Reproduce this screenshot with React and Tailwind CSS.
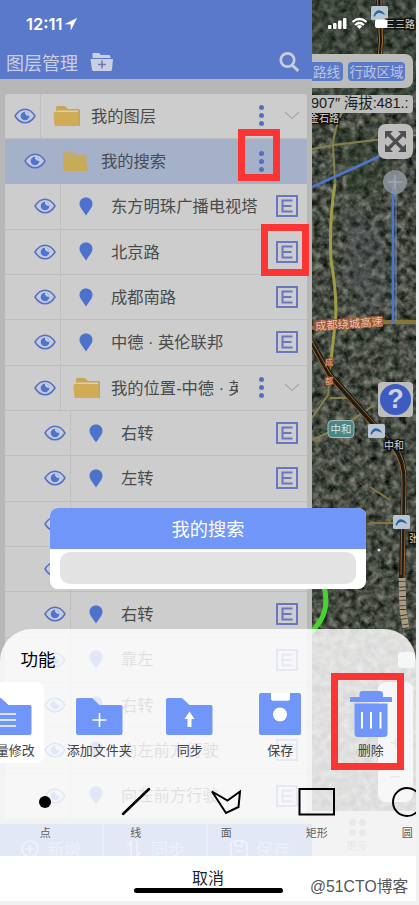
import React from "react";

const LINE = "border-[#bdbdbd]";

function Eye() {
  return (
    <svg width="22" height="16" viewBox="0 0 22 16" fill="none" className="shrink-0">
      <path d="M1 8C4 3.200 7.300 1.200 11 1.200S18 3.200 21 8C18 12.800 14.700 14.800 11 14.800S4 12.800 1 8Z" fill="#c3cbe0" stroke="#5b70bd" strokeWidth="1.500" />
      <circle cx="11" cy="8" r="4.300" fill="#4f74cc" />
      <path d="M11 3.700A4.300 4.300 0 0 1 15.300 8L12.500 7.500A2 2 0 0 0 11 6Z" fill="#c3cbe0" />
    </svg>
  );
}

function Pin() {
  return (
    <svg width="14" height="19" viewBox="0 0 14 19" className="shrink-0">
      <path d="M7 0.500C3.300 0.500 0.500 3.200 0.500 6.700C0.500 10.500 4 13.500 7 18.500C10 13.500 13.500 10.500 13.500 6.700C13.500 3.200 10.700 0.500 7 0.500Z" fill="#4d72cb" />
    </svg>
  );
}

function OpenFolder() {
  return (
    <svg width="28" height="22" viewBox="0 0 28 22" className="shrink-0">
      <path d="M3 21V2.500Q3 1 4.500 1H12L15 4H25.500Q27 4 27 5.500V21Z" fill="#c4a75c" />
      <path d="M3 7H25V5.500H4Z" fill="#ddd1ad" />
      <path d="M0.500 8.500Q0.500 7 2 7H23.500Q25 7 25 8.500L26 21H3Q1.500 21 1.400 19.500Z" fill="#cfac55" />
    </svg>
  );
}

function ClosedFolder() {
  return (
    <svg width="25" height="20" viewBox="0 0 25 20" className="shrink-0">
      <path d="M0 18V2Q0 0.500 1.500 0.500H9L12 3.500H22Q23.500 3.500 23.500 5V10L25 18.500Q25 20 23.500 20H1.500Q0 20 0 18Z" fill="#c1ab72" />
      <path d="M0 7H21.500L25 18.500Q25 20 23.500 20H1.500Q0 20 0 18Z" fill="#c8ab57" />
    </svg>
  );
}

function Dots() {
  return (
    <div className="flex w-5 shrink-0 flex-col items-center gap-[3px]">
      <i className="size-[5px] rounded-full bg-[#566fc4]" />
      <i className="size-[5px] rounded-full bg-[#566fc4]" />
      <i className="size-[5px] rounded-full bg-[#566fc4]" />
    </div>
  );
}

function Chevron() {
  return (
    <svg width="16" height="9" viewBox="0 0 16 9" fill="none" className="mr-[7px] ml-[13px] shrink-0">
      <path d="M1 1L8 7.500L15 1" stroke="#a9a9a9" strokeWidth="1.200" />
    </svg>
  );
}

function EditMark() {
  return (
    <svg width="22" height="22" viewBox="0 0 22 22" fill="none" className="mr-[9px] shrink-0">
      <rect x="1" y="1" width="20" height="20" stroke="#6a76bd" strokeWidth="2" />
      <path d="M16.500 5.500H6.500V16.500H16.500M6.500 11H15.500" stroke="#6a76bd" strokeWidth="2" />
    </svg>
  );
}

const rows = [
  { name: "我的图层", level: 0, kind: "open", chevron: true },
  { name: "我的搜索", level: 1, kind: "closed", selected: true },
  { name: "东方明珠广播电视塔", level: 2 },
  { name: "北京路", level: 2 },
  { name: "成都南路", level: 2 },
  { name: "中德 · 英伦联邦", level: 2 },
  { name: "我的位置-中德 · 英", level: 2, kind: "open", chevron: true },
  { name: "右转", level: 3 },
  { name: "左转", level: 3 },
  { name: "直行", level: 3 },
  { name: "左转", level: 3 },
  { name: "右转", level: 3 },
  { name: "靠左", level: 3 },
  { name: "右转", level: 3 },
  { name: "向左前方行驶", level: 3 },
  { name: "向左前方行驶", level: 3 },
];

const eyeCell = ["w-9 pl-[9px]", "w-[46px] pl-[19px]", "w-[56px] pl-[29px]", "w-[66px] pl-[39px]"];

function Row({ row }) {
  const folder = row.kind;
  return (
    <div className={`flex h-[45.330px] shrink-0 items-center border-b ${row.selected ? "border-[#a4b1ca] bg-[#a5b1c9]" : `${LINE} bg-[#cdcdcd]`}`}>
      <div className={`flex h-full shrink-0 items-center ${row.selected ? "" : "border-r border-[#c0c0c0]"} ${eyeCell[row.level]}`}>
        <Eye />
      </div>
      <div className="flex w-[50px] shrink-0 items-center pl-3">
        {folder === "open" && <OpenFolder />}
        {folder === "closed" && <ClosedFolder />}
        {!folder && <div className="pl-[6px]"><Pin /></div>}
      </div>
      <div className={`min-w-0 flex-1 overflow-hidden font-['Liberation_Sans','Noto_Sans_CJK_SC',sans-serif] text-[16.300px] whitespace-nowrap ${row.selected ? "text-[#474c56]" : "text-[#4b4b4b]"} ${folder ? "mr-[13px]" : ""}`}>{row.name}</div>
      {folder ? (
        <>
          <Dots />
          {row.chevron ? <Chevron /> : <span className="w-[36px] shrink-0" />}
        </>
      ) : (
        <EditMark />
      )}
    </div>
  );
}

function LayerPanel() {
  return (
    <div className="absolute top-0 left-0 flex h-[856px] w-[312px] flex-col bg-[#b7b7b7]">
      <header className="flex h-[79px] shrink-0 flex-col bg-[#5b79cb]">
        <div className="flex h-12 items-center pl-[26px] text-white">
          <span className="font-['Inter','Liberation_Sans',sans-serif] text-[16.500px] font-semibold">12:11</span>
          <svg width="12" height="12" viewBox="0 0 12 12" className="ml-[3px]">
            <path d="M11.500 0.500L0.500 6H6V11.500Z" fill="white" stroke="white" strokeWidth=".6" />
          </svg>
        </div>
        <div className="flex h-[27px] items-center pr-3 pl-[6px] text-[#c9d0e4]">
          <span className="text-lg">图层管理</span>
          <svg width="24" height="20" viewBox="0 0 24 20" className="ml-[12px]">
            <path d="M2.500 6V2Q2.500 1 3.500 1H9L11 3H19Q20.500 3 20.500 4.500V6Z" fill="#cbd0df" />
            <path d="M0.500 7H23L22 17.500Q21.800 19 20.500 19H3.500Q2.200 19 2 17.500Z" fill="#cbd0df" />
            <path d="M12 8.500V16.500M8 12.500H16" stroke="#6777bd" strokeWidth="1.500" />
          </svg>
          <svg width="22" height="22" viewBox="0 0 22 22" fill="none" className="ml-auto">
            <circle cx="9.500" cy="9" r="6.700" stroke="#c6ceda" strokeWidth="2.700" />
            <path d="M14 14L20.300 19.800" stroke="#c6ceda" strokeWidth="3" />
          </svg>
        </div>
      </header>
      <div className="mx-[5px] mt-[14.600px] flex flex-1 flex-col overflow-hidden rounded-t">
        {rows.map((row, i) => <Row key={i} row={row} />)}
      </div>
      <footer className="grid h-8 shrink-0 grid-cols-3 divide-x-2 divide-[#8298d3] bg-[#5b79cb] text-[17px] text-[#93a5d8]">
        <div className="flex items-center justify-center gap-2 pt-3"><FooterIcon />新增</div>
        <div className="flex items-center justify-center gap-2 pt-3"><FooterIcon kind="sync" />同步</div>
        <div className="flex items-center justify-center gap-2 pt-3"><FooterIcon kind="save" />保存</div>
      </footer>
    </div>
  );
}

function FooterIcon({ kind }) {
  return (
    <svg width="18" height="18" viewBox="0 0 18 18" fill="none" stroke="#a9b7df" strokeWidth="1.600">
      {kind === "save" && <path d="M1 4Q1 1 4 1H14L17 4V14Q17 17 14 17H4Q1 17 1 14ZM5 1V6H12V1M6 11H12" />}
      {kind === "sync" && <path d="M6 17V2L2 6M12 1V16L16 12" />}
      {!kind && <><circle cx="9" cy="9" r="8" /><path d="M9 5V13M5 9H13" /></>}
    </svg>
  );
}

function Metro({ x, y }) {
  return (
    <g transform={`translate(${x} ${y})`}>
      <rect width="17" height="14" rx="1.500" fill="#b9c5d2" />
      <path d="M2.500 9.500Q5 3.500 9 4.500Q12.500 5 14 9Q10 6.500 7.500 7Q5 7.500 3.500 11Z" fill="#28689d" />
    </g>
  );
}

function MapCanvas() {
  return (
    <svg className="absolute top-0 left-[312px]" width="104" height="901" viewBox="312 0 104 901">
      <defs>
        <filter id="ground" x="0" y="0" width="100%" height="100%" colorInterpolationFilters="sRGB">
          <feTurbulence type="fractalNoise" baseFrequency="0.14" numOctaves="5" seed="8" />
          <feColorMatrix values="0.65 0.25 0 0 -0.175  0.6 0.3 0 0 -0.155  0.55 0.3 0 0 -0.165  0 0 0 0 1" />
        </filter>
      </defs>
      <rect x="312" width="104" height="901" fill="#474c45" />
      <rect x="312" width="104" height="901" filter="url(#ground)" />
      <path d="M346 205L380 225L388 300L368 312L342 280Z" fill="#5d6579" opacity=".2" />
      <path d="M312 0H416V95H312Z" fill="#28382b" opacity=".3" />
      <path d="M335 130H392V185L350 200Z" fill="#22351f" opacity=".3" />
      <g stroke="#737a74" strokeWidth=".8" opacity=".45" fill="none">
        <path d="M312 215H332M312 250H330M345 200L375 235M312 470L360 445M325 480L375 452M335 500L388 466M330 440L372 500M315 455L350 520M312 560H365M365 560V585H380V560M388 340L416 360" />
      </g>
      <g fill="none">
        <path d="M379 0L381 40L379 60" stroke="#1d1b15" strokeWidth="6" />
        <path d="M377.500 0L379.500 40L378 60M381 0L382.500 40L381 60" stroke="#a9742f" strokeWidth="1" />
        <path d="M312 149L334 145L416 135M342 112Q334 130 333 145L335 184M331 360L328 395L312 418M312 440L345 425L374 405M330 398H350" stroke="#858247" strokeWidth="2" />
        <path d="M335 184Q329 220 331 260Q338 300 335 325L331 360" stroke="#9d9d48" strokeWidth="3" />
        <path d="M312 328Q360 321 416 322" stroke="#887535" strokeWidth="4" />
        <path d="M312 343L330 375L378 429L394 445Q405 459 404 485L402 580L405 629" stroke="#201c16" strokeWidth="6" />
        <path d="M312 341L330 373L380 429L395 445Q407 459 406 485L404 580M311 346L328 377L376 431L391 447Q403 462 402 485L401 575" stroke="#9a6733" strokeWidth="1" />
        <path d="M370 523H398M370 487L390 500" stroke="#837740" strokeWidth="2" />
        <path d="M312 187L376 158L388 150M393 184V324" stroke="#4d75ca" strokeWidth="2.800" />
        <path d="M396 184V322" stroke="#8090a5" strokeWidth="1" />
        <path d="M402 578L403 610L406 629" stroke="#a99b82" strokeWidth="7" strokeDasharray="3 .7 5 .7" />
        <circle cx="285" cy="600" r="41" stroke="#48d42f" strokeWidth="5" />
      </g>
      <Metro x={371} y={6} />
      <Metro x={368} y={424} />
      <Metro x={393} y={515} />
      <g fontFamily="Noto Sans CJK SC, sans-serif" fontSize="10" fill="#d4d4d4" stroke="#111" strokeWidth="3" paintOrder="stroke">
        <text x="385" y="28">三三路</text>
        <text x="309" y="122">金石路</text>
        <text x="384" y="449">中和</text>
        <text x="409" y="542">张</text>
      </g>
      <rect x="314" y="318" width="69" height="11" fill="#9d5538" transform="rotate(-4 348 323)" />
      <text x="315" y="328" fontFamily="Noto Sans CJK SC, sans-serif" fontSize="11.300" fill="#e4c7ae" transform="rotate(-4 348 323)">成都绕城高速</text>
      <g fontFamily="Noto Sans CJK SC, sans-serif" fontSize="8" fill="#e0aa88" stroke="#8c4f34" strokeWidth="1.500" paintOrder="stroke">
        <text x="325" y="365">成</text>
        <text x="325" y="384">都</text>
      </g>
      <rect x="328" y="420.500" width="26" height="17" rx="4" fill="#4a8687" stroke="#a7bdba" />
      <text x="330.500" y="433" fontFamily="Noto Sans CJK SC, sans-serif" fontSize="10.500" fill="#d7e3df">中和</text>
      <circle cx="379" cy="550" r="1.500" fill="#ddd" />
      <circle cx="395" cy="182" r="12" fill="#8f969f" opacity=".85" />
      <path d="M388 182H402M395 175V189" stroke="#b3bac1" strokeWidth="1.500" opacity=".6" />
    </svg>
  );
}

function MapControls() {
  return (
    <div className="absolute top-0 left-[312px] flex w-[104px] flex-col overflow-hidden">
      <div className="flex h-[54px] items-end pl-4">
        <svg width="63" height="14" viewBox="0 0 63 14" className="mb-6 shrink-0" fill="white">
          <rect x="0" y="9" width="3.500" height="4" rx="1" />
          <rect x="5" y="7" width="3.500" height="6" rx="1" />
          <rect x="10" y="4.500" width="3.500" height="8.500" rx="1" />
          <rect x="15" y="2" width="3.500" height="11" rx="1" />
          <path d="M31.500 13L28.800 10.200Q31.500 8 34.200 10.200Z" />
          <path d="M24.500 6Q31.500 -0.300 38.500 6M27 9Q31.500 5 36 9" fill="none" stroke="white" strokeWidth="2.200" />
          <rect x="47" y="3.500" width="12.500" height="8.500" rx="2" />
        </svg>
      </div>
      <div className="flex h-[34px] w-[101px] items-center gap-[5px] rounded-r-lg bg-[#bcbcb9] text-[14px] text-[#bbc5dc]">
        <span className="flex h-[19px] w-[31px] items-center justify-end overflow-hidden rounded-r bg-[#5b79cb] pr-[3px] text-[13.500px] whitespace-nowrap">路线</span>
        <span className="flex h-[19px] w-[57px] items-center justify-center rounded bg-[#5b79cb] text-[13.500px] whitespace-nowrap">行政区域</span>
      </div>
      <div className="mt-[7px] flex h-[18px] w-[101px] items-center overflow-hidden rounded-r bg-[#bdbdbb] font-['Liberation_Sans','Noto_Sans_CJK_SC',sans-serif] text-[14.500px] tracking-[-0.1px] whitespace-nowrap text-[#1c1c1c]">
        <span className="-ml-px">907″ 海拔:481.:</span>
      </div>
      <div className="mt-[11px] ml-[66px] flex size-[35px] items-center justify-center rounded-lg bg-[#bdbdbb]">
        <svg width="23" height="23" viewBox="0 0 23 23">
          <path d="M3 3L20 20M20 3L3 20" stroke="#4b4e4e" strokeWidth="3.300" />
          <path d="M1 1H9L1 9ZM22 1H14L22 9ZM1 22H9L1 14ZM22 22H14L22 14Z" fill="#4b4e4e" />
        </svg>
      </div>
      <div className="mt-[223px] ml-[66px] flex size-[35px] items-center justify-center rounded bg-[#bdbdbb]">
        <div className="flex size-[31px] items-center justify-center rounded-full bg-[#3c5cc0]">
          <span className="font-['Liberation_Sans',sans-serif] text-[27px] leading-none font-bold text-[#cdd2df]">?</span>
        </div>
      </div>
      <div className="mt-[235px] ml-[86px] h-[16px] w-[17px] self-start rounded-sm bg-[#c3ccd8]" />
      <div className="mt-[14px] ml-[66px] flex h-[120px] w-[35px] flex-col items-center justify-between rounded-lg bg-[#d0d0d0] py-3 text-xl text-[#777]">
        <span className="invisible">·</span><span>+</span><span>−</span>
      </div>
      <div className="mt-[9px] flex h-[48px] flex-col items-center justify-center gap-1 bg-[#b9b9b9] pr-[14px] text-[11px] text-[#7a7a7a]">
        <div className="grid grid-cols-2 gap-[3px]">
          <i className="size-[7px] rounded-sm bg-[#7b7b7b]" /><i className="size-[7px] rounded-sm bg-[#7b7b7b]" />
          <i className="size-[7px] rounded-sm bg-[#7b7b7b]" /><i className="size-[7px] rounded-sm bg-[#7b7b7b]" />
        </div>
        <span className="leading-none">更多</span>
      </div>
    </div>
  );
}

function RenameDialog() {
  return (
    <div className="absolute top-[508px] left-[50px] flex h-[81px] w-[316px] flex-col overflow-hidden rounded-lg bg-white">
      <div className="flex h-[40.500px] items-center justify-center bg-[#7096fa] text-[18.200px] text-white">我的搜索</div>
      <div className="mx-[10px] mt-[3.500px] h-8 rounded-[10px] bg-[#e3e3e3]" />
    </div>
  );
}

function FolderTool({ children }) {
  return (
    <svg width="47" height="40" viewBox="0 0 47 40" fill="none">
      <path d="M0 4Q0 2 2 2H16L23.500 9H45Q46.500 9 46.500 10.500V36.500Q46.500 39 44 39H2.500Q0 39 0 36.500Z" fill="#7096fa" />
      {children}
    </svg>
  );
}

const tools = [
  { label: "批量修改", active: true, icon: <FolderTool><path d="M15 18H31M15 24H31M15 30H31" stroke="white" strokeWidth="1.500" /></FolderTool> },
  { label: "添加文件夹", icon: <FolderTool><path d="M23.500 17V31M16.500 24H30.500" stroke="white" strokeWidth="1.600" /></FolderTool> },
  { label: "同步", icon: <FolderTool><path d="M23.500 15.500L28.500 23H25.500V31H21.500V23H18.500Z" fill="white" /></FolderTool> },
  {
    label: "保存",
    icon: (
      <svg width="42" height="44" viewBox="0 0 42 44">
        <path d="M2 1H12V6.500Q12 8.500 14 8.500H29Q31 8.500 31 6.500V1H40Q42 1 42 3V41Q42 43 40 43H2Q0 43 0 41V3Q0 1 2 1Z" fill="#7096fa" />
        <path d="M12 1H31V6.500Q31 8.500 29 8.500H14Q12 8.500 12 6.500Z" fill="white" />
        <circle cx="21" cy="22.500" r="7" fill="white" />
      </svg>
    ),
  },
  {
    label: "删除",
    icon: (
      <svg width="42" height="48" viewBox="0 0 42 48">
        <path d="M9.500 7V4Q9.500 1 12.500 1H30Q33 1 33 4V7H41Q42 7 42 8V12H0V8Q0 7 1 7Z" fill="#7096fa" />
        <path d="M4.500 13.500H37.500V43.500Q37.500 47 34 47H8Q4.500 47 4.500 43.500Z" fill="#7096fa" />
        <path d="M12 22V38.500M21 22V38.500M30.500 22V38.500" stroke="white" strokeWidth="2" />
      </svg>
    ),
  },
];

const shapes = [
  { label: "点", icon: <circle cx="19" cy="15" r="6" fill="black" strokeWidth="0" /> },
  { label: "线", icon: <path d="M6 27L32 2" strokeWidth="2.500" /> },
  { label: "面", icon: <path d="M5 4.500L20.500 13.500L33 4.500L31.500 20L19 26Z" strokeWidth="2" strokeLinejoin="miter" /> },
  { label: "矩形", icon: <rect x="1.500" y="2" width="34.500" height="25.500" strokeWidth="2" /> },
  { label: "圆", icon: <circle cx="19" cy="15" r="14" strokeWidth="2" /> },
];

function ActionSheet() {
  return (
    <div className="absolute top-[629px] left-0 flex h-[272px] w-[416px] flex-col overflow-hidden rounded-t-[32px]">
      <div className="flex flex-1 flex-col bg-white/83">
        <h2 className="flex h-[53px] shrink-0 items-center pt-[8px] pl-[20.500px] text-[17.500px] font-normal text-black">功能</h2>
        <div className="-ml-[36.500px] flex shrink-0">
          {tools.map((t) => (
            <div key={t.label} className="flex w-[90.500px] shrink-0 justify-center">
              <div className={`flex h-[81px] w-[70px] flex-col items-center rounded-lg ${t.active ? "bg-white" : ""}`}>
                <div className={`flex h-[58px] items-center justify-center ${t.label === "保存" || t.label === "删除" ? "pt-[6px]" : "pt-[10px]"}`}>{t.icon}</div>
                <span className="text-[13px] leading-5 whitespace-nowrap text-[#424242]">{t.label}</span>
              </div>
            </div>
          ))}
        </div>
        <div className="mt-[24px] flex shrink-0">
          {shapes.map((s) => (
            <div key={s.label} className="flex w-[90.500px] shrink-0 flex-col items-center">
              <svg width="38" height="30" viewBox="0 0 38 30" fill="none" stroke="black" strokeLinecap="round" className="overflow-visible">{s.icon}</svg>
              <span className="mt-[7px] text-[11px] leading-4 text-[#5d5d5d]">{s.label}</span>
            </div>
          ))}
        </div>
      </div>
      <div className="flex h-[45px] shrink-0 flex-col items-center bg-white text-base text-[#1f1f1f]">
        <span className="mt-[10px] leading-[22px]">取消</span>
        <i className="h-[5px] w-[149px] shrink-0 rounded-full bg-black" />
      </div>
    </div>
  );
}

export default function App() {
  return (
    <div className="h-[905px] w-[419px] overflow-hidden bg-[#f0f0f0] font-['Noto_Sans_CJK_SC',sans-serif]">
      <div className="relative h-[901px] w-[416px] overflow-hidden">
        <MapCanvas />
        <MapControls />
        <LayerPanel />
        <RenameDialog />
        <ActionSheet />
        <div className="absolute top-[129px] left-[238px] h-[52px] w-[42px] border-[7px] border-[#fb3434]" />
        <div className="absolute top-[224px] left-[261px] h-[52px] w-[48px] border-[7px] border-[#fb3434]" />
        <div className="absolute top-[673px] left-[331px] h-[97px] w-[73px] border-[7px] border-[#fb3434]" />
        <div className="absolute top-[877px] left-[310px] font-['Liberation_Sans','Noto_Sans_CJK_SC',sans-serif] text-[15.800px] leading-5 whitespace-nowrap text-[#555] [text-shadow:-1px_-1px_0_#fff]">@51CTO博客</div>
      </div>
    </div>
  );
}
